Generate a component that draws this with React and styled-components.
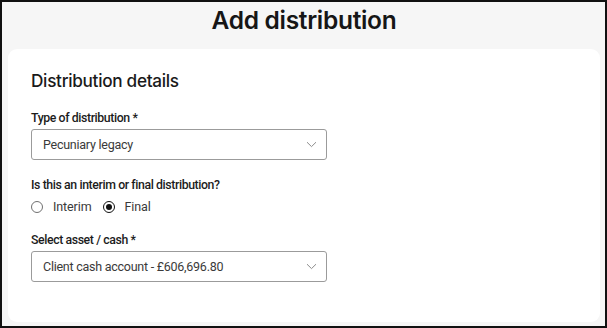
import styled, { createGlobalStyle } from "styled-components";

const GlobalStyle = createGlobalStyle`
  * { box-sizing: border-box; }
  body {
    margin: 0;
    font-family: Roboto, "Liberation Sans", Arial, sans-serif;
    color: #1c1c1c;
  }
`;

function Chevron() {
  return (
    <svg width="11" height="7" viewBox="0 0 11 7" fill="none">
      <path d="M1 1.2 L5.5 5.6 L10 1.2" stroke="#8c8c8c" strokeWidth="1" />
    </svg>
  );
}

function Select({ value }) {
  return (
    <SelectBox>
      <span>{value}</span>
      <Chevron />
    </SelectBox>
  );
}

export default function App() {
  return (
    <>
      <GlobalStyle />
      <Frame>
        <Title>Add distribution</Title>
        <Card>
          <CardTitle>Distribution details</CardTitle>
          <Field>
            <Label>Type of distribution *</Label>
            <Select value="Pecuniary legacy" />
          </Field>
          <Field>
            <Label>Is this an interim or final distribution?</Label>
            <RadioRow>
              <RadioOption>
                <Radio />
                Interim
              </RadioOption>
              <RadioOption>
                <Radio checked />
                Final
              </RadioOption>
            </RadioRow>
          </Field>
          <Field>
            <Label>Select asset / cash *</Label>
            <Select value="Client cash account - £606,696.80" />
          </Field>
        </Card>
      </Frame>
    </>
  );
}

const Frame = styled.div`
  width: 607px;
  height: 328px;
  border: 2px solid #111;
  background: #f6f6f6;
  padding: 0 5px 4px 6px;
  display: flex;
  flex-direction: column;
`;

const Title = styled.h1`
  margin: 0;
  height: 47px;
  font-family: Inter, "Liberation Sans", Arial, sans-serif;
  font-size: 24.5px;
  font-weight: 600;
  letter-spacing: -0.3px;
  text-align: center;
  line-height: 36px;
  color: #161616;
`;

const Card = styled.section`
  flex: 1;
  background: #fff;
  border-radius: 9px;
  padding: 21px 23px 0;
`;

const CardTitle = styled.h2`
  margin: 0 0 18px;
  font-family: Inter, "Liberation Sans", Arial, sans-serif;
  font-size: 17.2px;
  font-weight: 500;
  letter-spacing: -0.3px;
  line-height: 22px;
  color: #1a1a1a;
`;

const Field = styled.div`
  margin-bottom: 17px;
`;

const Label = styled.div`
  font-size: 12.3px;
  font-weight: 500;
  letter-spacing: -0.4px;
  line-height: 16px;
  margin-bottom: 3px;
  color: #1c1c1c;
`;

const SelectBox = styled.div`
  width: 296px;
  height: 31px;
  border: 1px solid #9b9b9b;
  border-radius: 3px;
  display: flex;
  align-items: center;
  justify-content: space-between;
  padding: 0 9px 0 11px;
  font-size: 12.5px;
  letter-spacing: -0.25px;
  color: #3a3a3a;
`;

const RadioRow = styled.div`
  display: flex;
  gap: 11px;
  margin-top: 6px;
  height: 16px;
  align-items: center;
`;

const RadioOption = styled.label`
  display: flex;
  align-items: center;
  gap: 10px;
  font-size: 12.5px;
  letter-spacing: -0.1px;
  color: #3a3a3a;
  line-height: 16px;
`;

const Radio = styled.span`
  width: 12px;
  height: 12px;
  border-radius: 50%;
  border: ${(p) => (p.checked ? "1.6px solid #111" : "1px solid #707070")};
  display: flex;
  align-items: center;
  justify-content: center;
  &::after {
    content: "";
    width: 6px;
    height: 6px;
    border-radius: 50%;
    background: ${(p) => (p.checked ? "#111" : "transparent")};
  }
`;
